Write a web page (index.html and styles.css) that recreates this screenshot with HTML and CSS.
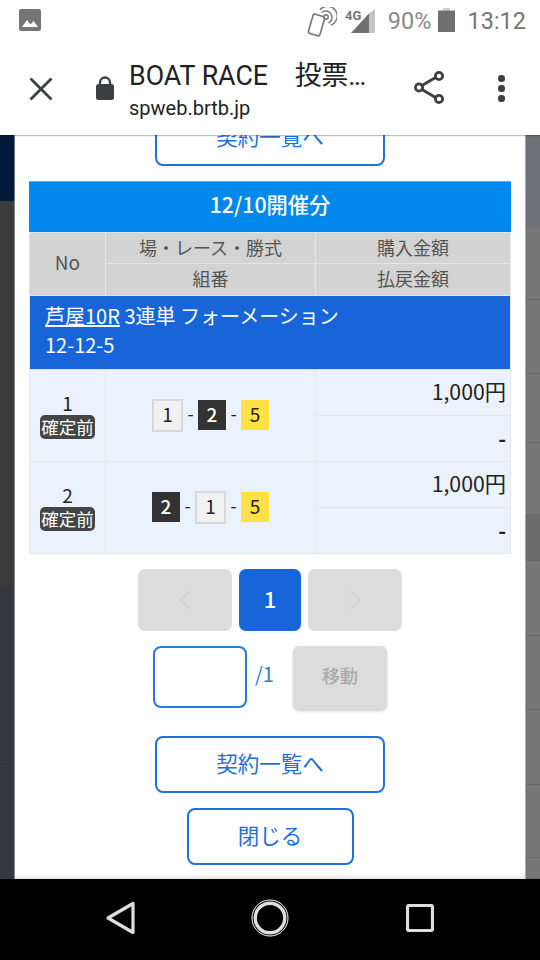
FILE: index.html
```html
<!DOCTYPE html>
<html lang="ja">
<head>
<meta charset="utf-8">
<title>BOAT RACE 投票</title>
<link rel="stylesheet" href="styles.css">
</head>
<body>
<div class="screen">
  <header class="status">
    <svg class="ic-image" viewBox="0 0 22 22"><path fill="#757575" d="M2 0h18a2 2 0 0 1 2 2v18a2 2 0 0 1-2 2H2a2 2 0 0 1-2-2V2a2 2 0 0 1 2-2z"/><path fill="#fff" d="M3 18l5-7 3.500 4.500 3-3.500L19 18z"/></svg>
    <div class="status-right">
      <svg class="ic-nfc" viewBox="0 0 30 30" fill="none" stroke="#757575"><rect x="3.500" y="8" width="12" height="20" rx="2" transform="rotate(16 9.500 18)" stroke-width="1.600" fill="#fff"/><circle cx="19" cy="10" r="2.200" stroke-width="1.400"/><path stroke-width="1.400" d="M14.500 5.500a6.400 6.400 0 1 1 7 10.600"/><path stroke-width="1.400" d="M13 2.800a9.700 9.700 0 1 1 11 15.200"/></svg>
      <svg class="ic-signal" viewBox="0 0 30 24"><path fill="#c4c4c4" d="M30 0v24H22V6z"/><path fill="#707070" d="M24 4.500V24H6z"/><text x="0" y="11" class="g4">4G</text></svg>
      <span class="pct">90%</span>
      <svg class="ic-batt" viewBox="0 0 17 24"><path fill="#d0d0d0" d="M5 0h7v2.500H5z"/><path fill="#707070" d="M0 2.500h17V24H0z"/></svg>
      <span class="clock">13:12</span>
    </div>
  </header>
  <div class="toolbar">
    <svg class="ic-close" viewBox="0 0 24 24"><path d="M1.500 1.500l21 21M22.500 1.500l-21 21" stroke="#3c4043" stroke-width="2.800" fill="none"/></svg>
    <svg class="ic-lock" viewBox="0 0 18 24"><path fill="none" stroke="#3c4043" stroke-width="2.300" d="M4 10V6.500a5 5 0 0 1 10 0V10"/><rect x="0" y="8" width="18" height="16" rx="2.500" fill="#3c4043"/></svg>
    <div class="titles">
      <div class="title">BOAT RACE　投票…</div>
      <div class="url">spweb.brtb.jp</div>
    </div>
    <svg class="ic-share" viewBox="0 0 30 33" fill="none" stroke="#3c4043" stroke-width="2.800"><path d="M8 14.500L21.500 6.500M8 18.500L21.500 26.500"/><circle cx="5" cy="16.500" r="3.600"/><circle cx="25" cy="5" r="3.600"/><circle cx="25" cy="28" r="3.600"/></svg>
    <div class="dots"><i></i><i></i><i></i></div>
  </div>
  <div class="content">
    <div class="strip strip-left">
      <div class="sl a"></div><div class="sl b"></div><div class="sl c"></div><div class="sl d"></div>
    </div>
    <main class="modal">
      <a class="btn btn-wide first">契約一覧へ</a>
      <section class="table">
        <h2 class="table-title">12/10開催分</h2>
        <div class="grid">
          <div class="th no">No</div>
          <div class="th up">場・レース・勝式</div>
          <div class="th up">購入金額</div>
          <div class="th">組番</div>
          <div class="th">払戻金額</div>
          <div class="race"><div><u>芦屋10R</u> 3連単 フォーメーション</div><div>12-12-5</div></div>

          <div class="td idx"><span class="idx-num">1</span><span class="tag">確定前</span></div>
          <div class="td combo"><b class="n n1">1</b><span class="dash">-</span><b class="n n2">2</b><span class="dash">-</span><b class="n n5">5</b></div>
          <div class="td amt">1,000円</div>
          <div class="td amt low">-</div>

          <div class="td idx"><span class="idx-num">2</span><span class="tag">確定前</span></div>
          <div class="td combo"><b class="n n2">2</b><span class="dash">-</span><b class="n n1">1</b><span class="dash">-</span><b class="n n5">5</b></div>
          <div class="td amt">1,000円</div>
          <div class="td amt low">-</div>
        </div>
      </section>
      <nav class="pager">
        <span class="pg wide"><svg class="chev" viewBox="0 0 14 20"><path d="M12 1L2 10l10 9" fill="none" stroke="#d0d0d0" stroke-width="1.600"/></svg></span>
        <span class="pg cur">1</span>
        <span class="pg wide"><svg class="chev" viewBox="0 0 14 20"><path d="M2 1l10 9-10 9" fill="none" stroke="#d0d0d0" stroke-width="1.600"/></svg></span>
      </nav>
      <div class="jump">
        <div class="jump-input"></div>
        <span class="jump-total">/1</span>
        <span class="jump-btn">移動</span>
      </div>
      <a class="btn btn-wide">契約一覧へ</a>
      <a class="btn btn-close">閉じる</a>
    </main>
    <div class="strip strip-right">
      <div class="sr top" style="height:92px"></div>
      <div class="sr" style="height:73px"></div>
      <div class="sr" style="height:74px"></div>
      <div class="sr" style="height:69px"></div>
      <div class="sr" style="height:72px"></div>
      <div class="sr dark" style="height:46px"></div>
      <div class="sr" style="height:75px"></div>
      <div class="sr" style="height:74px"></div>
      <div class="sr" style="height:75px"></div>
      <div class="sr" style="height:73px"></div>
      <div class="sr" style="height:21px"></div>
    </div>
  </div>
  <footer class="navbar">
    <span class="nav-slot"><svg class="nav-back" viewBox="0 0 30 34" fill="none" stroke="#dedede" stroke-width="3.200" stroke-linejoin="round"><path d="M3 17L28 2.500v29z"/></svg></span>
    <span class="nav-slot"><svg class="nav-home" viewBox="0 0 38 38" fill="none"><circle cx="19" cy="19" r="18" stroke="#fff" stroke-width="1"/><circle cx="19" cy="19" r="14.800" stroke="#dedede" stroke-width="3.400"/></svg></span>
    <span class="nav-slot"><svg class="nav-sq" viewBox="0 0 28 28" fill="none"><rect x="1.500" y="1.500" width="25" height="25" rx="1.500" stroke="#dedede" stroke-width="3.200"/></svg></span>
  </footer>
</div>
</body>
</html>
```
FILE: styles.css
```css
* { box-sizing: border-box; }
html, body { margin: 0; padding: 0; }
body {
  width: 540px;
  height: 960px;
  overflow: hidden;
  font-family: "Noto Sans CJK JP", "Noto Sans", sans-serif;
  color: #222;
  background: #000;
}
.screen { width: 540px; height: 960px; display: flex; flex-direction: column; }

/* status bar */
.status {
  height: 45px;
  background: #fff;
  display: flex;
  align-items: flex-start;
  justify-content: space-between;
  padding: 8px 14px 0 19px;
  flex: none;
}
.ic-image { width: 22px; height: 22px; margin-top: 1px; }
.status-right { display: flex; align-items: flex-start; font-family: Roboto, sans-serif; color: #8a8a8a; }
.ic-nfc { width: 30px; height: 30px; margin-top: -1px; }
.ic-signal { width: 30px; height: 24px; margin: 1px 0 0 8px; }
.g4 { font: bold 13px Roboto, sans-serif; fill: #757575; }
.pct { font-size: 23.500px; line-height: 26px; margin-left: 13px; }
.ic-batt { width: 17px; height: 24px; margin-left: 7px; }
.clock { font-size: 23.500px; line-height: 26px; margin-left: 12px; color: #757575; }

/* toolbar */
.toolbar {
  height: 90px;
  flex: none;
  display: flex;
  align-items: flex-start;
  background: #fff;
  position: relative;
  z-index: 3;
  box-shadow: 0 1px 1px rgba(0,0,0,.25);
}
.ic-close { width: 24px; height: 24px; margin: 32px 0 0 29px; }
.ic-lock { width: 18px; height: 24px; margin: 31px 0 0 43px; }
.titles { width: 260px; margin: 13px 0 0 15px; font-family: Roboto, "Noto Sans CJK JP", sans-serif; color: #202124; }
.title { font-size: 26.750px; line-height: 36px; white-space: nowrap; }
.url { font-size: 20px; line-height: 26px; margin-top: 1px; }
.ic-share { width: 30px; height: 33px; margin: 26px 0 0 25px; }
.dots { display: flex; flex-direction: column; gap: 3.500px; margin: 30px 0 0 54px; }
.dots i { display: block; width: 6.500px; height: 6.500px; border-radius: 50%; background: #3c4043; }

/* content */
.content { flex: 1; display: flex; overflow: hidden; min-height: 0; }
.strip { width: 15px; flex: none; display: flex; flex-direction: column; }
.sl.a { height: 66px; background: #021a3a; }
.sl.b { height: 384px; background: #3b3b3b; }
.sl.c { height: 180px; background: #34383e; border-bottom: 1px solid #30343a; }
.sl.d { flex: 1; background: #34383e; }
.sr { background: #767676; border-bottom: 1px solid #686868; flex: none; }
.sr.top { background: #6d7178; border-bottom: 0; }
.sr.dark { background: #6b6b6b; }

.modal {
  width: 510px;
  flex: none;
  background: #fff;
  display: flex;
  flex-direction: column;
  align-items: center;
  gap: 15px;
  box-shadow: 0 0 0 1px rgba(255,255,255,.4), inset 0 -4px 4px -2px rgba(0,0,0,.12);
  position: relative;
  z-index: 1;
}
.btn {
  display: flex;
  align-items: center;
  justify-content: center;
  height: 57px;
  flex: none;
  border: 2px solid #1e72e0;
  border-radius: 8px;
  color: #1e6fdc;
  font-size: 21.500px;
  background: #fff;
  padding-bottom: 4px;
}
.btn-wide { width: 230px; }
.btn-close { width: 167px; }
.first { margin-top: -26px; }

/* table */
.table { width: 482px; flex: none; }
.table-title {
  margin: 0;
  height: 51px;
  background: #0088ec;
  border-top: 1px solid #5cb3f3;
  color: #fff;
  font-size: 21.250px;
  font-weight: 500;
  display: flex;
  align-items: center;
  justify-content: center;
  padding-bottom: 8px;
}
.grid {
  display: grid;
  grid-template-columns: 75px 209px 194px;
  grid-template-rows: 30px 31px 73px 45px 45px 45px 45px;
  gap: 1px;
  background: #e6e6e6;
  border: 1px solid #e6e6e6;
}
.th {
  background: #d3d3d3;
  color: #555;
  font-size: 18px;
  display: flex;
  align-items: center;
  justify-content: center;
  padding-bottom: 4px;
}
.th.up { padding-bottom: 2px; }
.th.no { grid-row: 1 / span 2; font-size: 19px; padding-bottom: 6px; }
.race {
  grid-column: 1 / -1;
  background: #1765d8;
  color: #fff;
  font-size: 20px;
  line-height: 29px;
  padding: 5px 15px;
}
.td { background: #eaf2fd; }
.idx {
  grid-row: span 2;
  display: flex;
  flex-direction: column;
  align-items: center;
  justify-content: center;
  font-size: 19px;
  padding-bottom: 1px;
}
.idx-num { line-height: 24px; }
.tag {
  background: #454545;
  color: #fff;
  font-size: 17.500px;
  line-height: 23px;
  height: 24px;
  width: 55px;
  text-align: center;
  border-radius: 5px;
  white-space: nowrap;
}
.combo {
  grid-row: span 2;
  display: flex;
  align-items: center;
  padding-left: 46px;
  padding-bottom: 1px;
}
.n {
  display: flex;
  align-items: center;
  justify-content: center;
  width: 28px;
  height: 30px;
  font-size: 19px;
  font-weight: 500;
  padding-bottom: 3px;
}
.n1 { width: 31px; height: 33px; background: #f1f1f1; border: 2px solid #d8d8d8; font-weight: 400; }
.n2 { background: #333; color: #fff; }
.n5 { background: #ffe146; font-weight: 400; }
.dash { width: 15px; text-align: center; font-size: 18px; line-height: 24px; padding-bottom: 5px; }
.amt {
  display: flex;
  justify-content: flex-end;
  align-items: center;
  padding-right: 4px;
  padding-bottom: 4px;
  font-size: 21.250px;
}
.amt.low { font-weight: 700; padding-bottom: 3px; }

/* pager */
.pager { display: flex; gap: 7px; flex: none; }
.pg {
  height: 62px;
  width: 62px;
  border-radius: 7px;
  background: #dcdcdc;
  display: flex;
  align-items: center;
  justify-content: center;
}
.pg.wide { width: 94px; }
.pg.cur { background: #1765d8; color: #fff; font-size: 22px; font-weight: 500; padding-bottom: 4px; }
.chev { width: 14px; height: 20px; }

.jump { display: flex; align-items: flex-start; margin-bottom: 12px; flex: none; }
.jump-input { width: 94px; height: 62px; border: 2px solid #2a78e4; border-radius: 8px; }
.jump-total { width: 38px; margin-left: 8px; color: #2a78e4; font-size: 20px; line-height: 56px; }
.jump-btn {
  width: 94px;
  height: 63px;
  border-radius: 6px;
  background: #dcdcdc;
  color: #aaa;
  font-size: 18px;
  font-weight: 500;
  display: flex;
  align-items: center;
  justify-content: center;
  padding-bottom: 6px;
  box-shadow: 0 2px 3px rgba(0,0,0,.2);
}

/* nav */
.navbar { height: 81px; flex: none; background: #000; position: relative; z-index: 2; display: flex; align-items: center; justify-content: center; padding-bottom: 1px; }
.nav-slot { width: 150px; height: 40px; display: flex; align-items: center; justify-content: center; margin-top: -3px; }
.nav-back { width: 30px; height: 34px; }
.nav-home { width: 38px; height: 38px; }
.nav-sq { width: 28px; height: 28px; }
```
